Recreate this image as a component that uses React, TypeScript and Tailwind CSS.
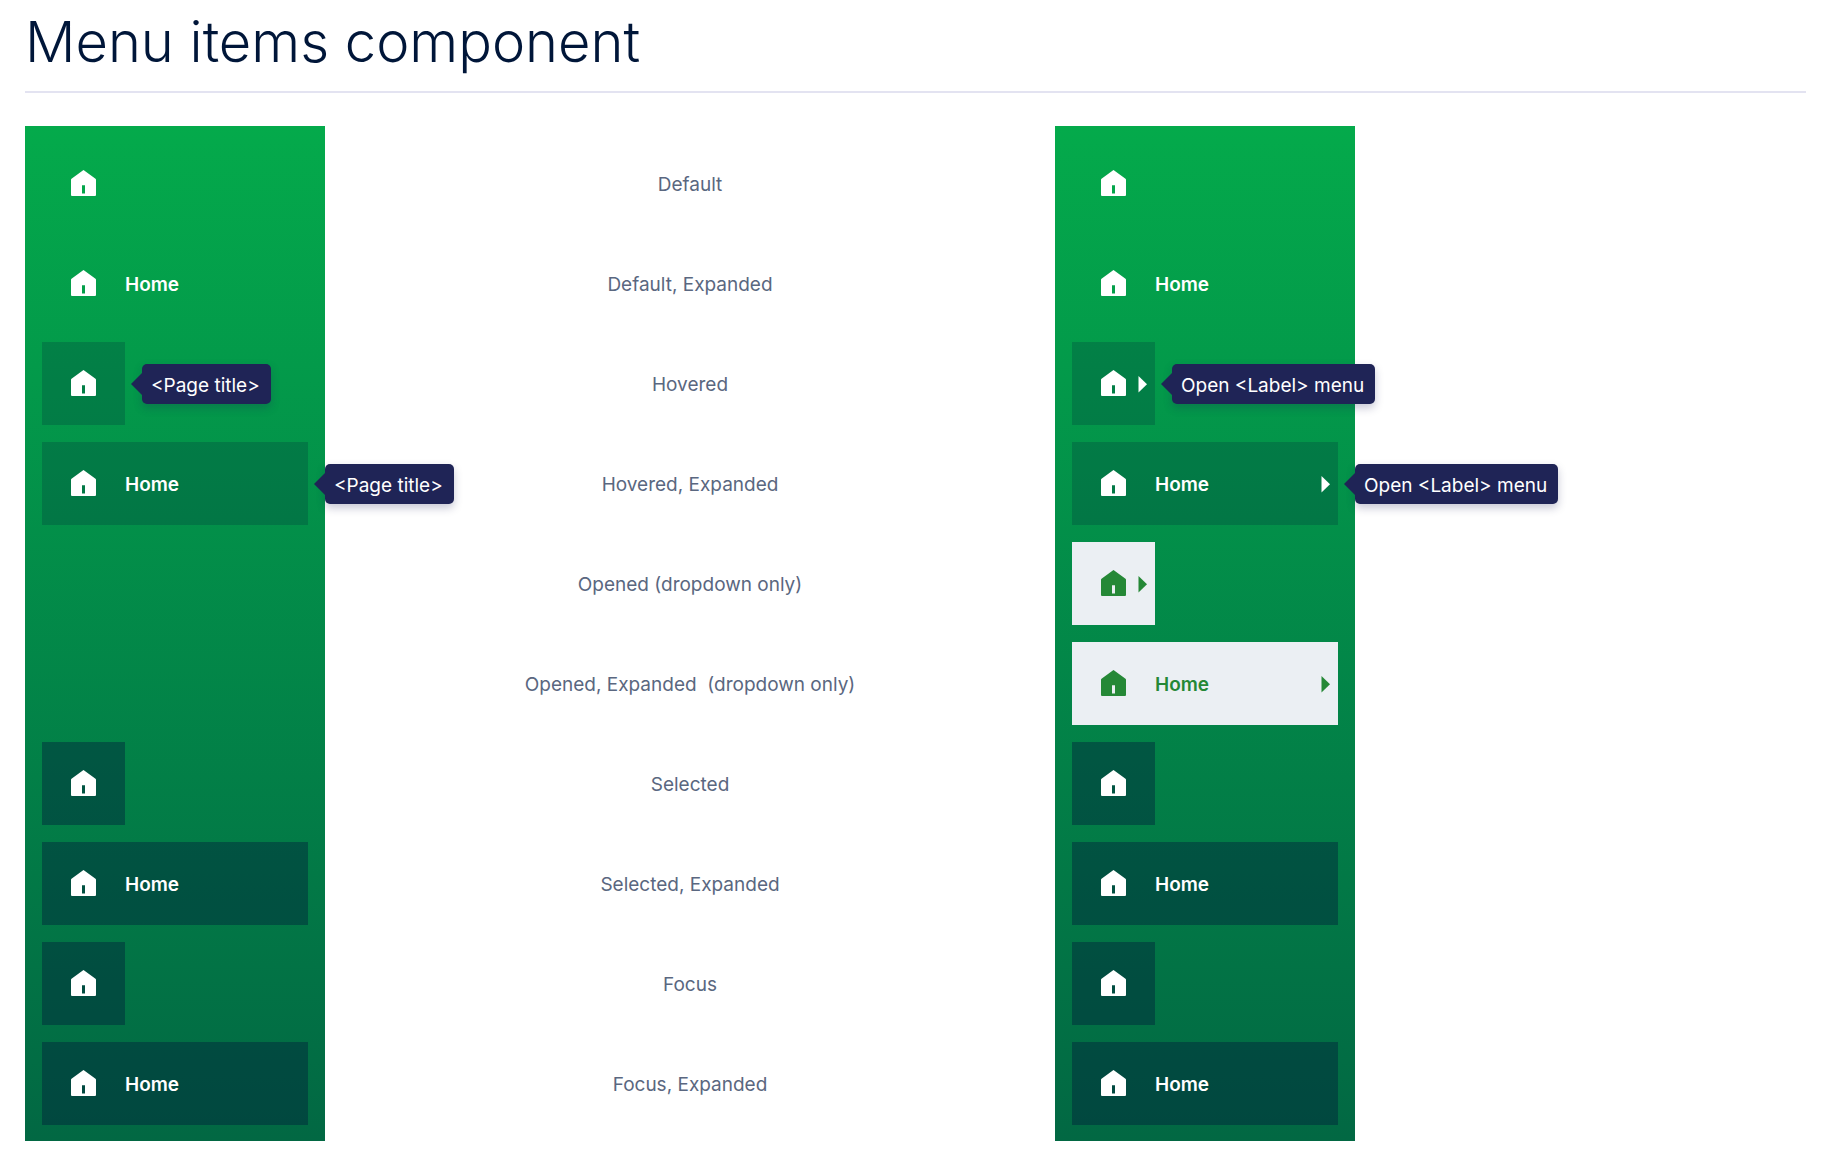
import React from 'react';
import clsx from 'clsx';

type State = 'default' | 'hovered' | 'opened' | 'selected' | 'focus';

type Row = {
  caption: string;
  state: State;
  expanded?: boolean;
};

const rows: Row[] = [
  { caption: 'Default', state: 'default' },
  { caption: 'Default, Expanded', state: 'default', expanded: true },
  { caption: 'Hovered', state: 'hovered' },
  { caption: 'Hovered, Expanded', state: 'hovered', expanded: true },
  { caption: 'Opened (dropdown only)', state: 'opened' },
  { caption: 'Opened, Expanded  (dropdown only)', state: 'opened', expanded: true },
  { caption: 'Selected', state: 'selected' },
  { caption: 'Selected, Expanded', state: 'selected', expanded: true },
  { caption: 'Focus', state: 'focus' },
  { caption: 'Focus, Expanded', state: 'focus', expanded: true },
];

const stateStyles: Record<State, string> = {
  default: 'text-white',
  hovered: 'bg-[#001639]/20 text-white',
  opened: 'bg-[#ebeff3] text-[#258836]',
  selected: 'bg-[#001639]/40 text-white',
  focus: 'bg-[#001639]/40 text-white',
};

const HomeIcon = () => (
  <svg className="h-[27px] w-[25px] shrink-0" viewBox="0 0 25 27" fill="currentColor" aria-hidden="true">
    <path
      fillRule="evenodd"
      d="M11.8 0.4a1.1 1.1 0 0 1 1.4 0L24.5 8.7a1.2 1.2 0 0 1 .5 1V25a1 1 0 0 1-1 1H1a1 1 0 0 1-1-1V9.7a1.2 1.2 0 0 1 .5-1zM11 15.3V23.5H14V15.3z"
    />
  </svg>
);

const Caret = () => (
  <svg className="h-[19px] w-[9px]" viewBox="0 0 9 19" fill="currentColor" aria-hidden="true">
    <path d="M0.5 2L9 10.3L0.5 18.6z" />
  </svg>
);

const Tooltip = ({ text }: { text: string }) => (
  <div
    role="tooltip"
    className="absolute left-full top-[22px] z-10 ml-[17px] flex h-10 items-center whitespace-nowrap rounded-[5px] bg-[#1f2456] pl-[9px] pr-[11px] pt-[3px] text-[19px] leading-7 text-white shadow-[0_4px_8px_rgba(31,36,86,0.25)]"
  >
    <svg
      className="absolute right-full top-[9px] h-[22px] w-[11px]"
      viewBox="0 0 11 22"
      fill="#1f2456"
      aria-hidden="true"
    >
      <path d="M11 0L0 11L11 22z" />
    </svg>
    {text}
  </div>
);

const MenuItem = ({ row, dropdown }: { row: Row; dropdown?: boolean }) => {
  const { state, expanded } = row;
  const showCaret = dropdown && (state === 'hovered' || state === 'opened');

  return (
    <div className={clsx('relative', expanded ? 'w-full' : 'w-[83px]')}>
      <button
        type="button"
        aria-label="Home"
        className={clsx(
          'flex h-[83px] w-full items-center pl-[29px] pr-2 text-[19px] font-semibold leading-7',
          stateStyles[state]
        )}
      >
        <HomeIcon />
        {expanded && <span className="ml-[29px] pt-[3px]">Home</span>}
        {showCaret && (
          <span className="ml-auto">
            <Caret />
          </span>
        )}
      </button>
      {state === 'hovered' && <Tooltip text={dropdown ? 'Open <Label> menu' : '<Page title>'} />}
    </div>
  );
};

const Sidebar = ({ dropdown }: { dropdown?: boolean }) => (
  <nav className="bg-linear-to-b from-[#04aa4b] to-[#026843] px-[17px] py-4">
    <ul className="flex flex-col gap-[17px]">
      {rows.map((row) => (
        <li key={row.caption} className="h-[83px]">
          {(dropdown || row.state !== 'opened') && <MenuItem row={row} dropdown={dropdown} />}
        </li>
      ))}
    </ul>
  </nav>
);

const App = () => {
  return (
    <main className="min-h-screen bg-white pb-5 pl-[25px] pr-5 font-['Inter',sans-serif]">
      <h1 className="border-b-2 border-[#e3e3f1] pb-[14px] pt-[7px] text-[56px] font-light leading-[70px] text-[#001639]">
        Menu items component
      </h1>
      <div className="mt-[33px] grid grid-cols-[300px_730fr_300px_451fr]">
        <Sidebar />
        <ul className="flex flex-col gap-[17px] pt-[17px] text-center text-[19px] leading-7 text-[#5a6780]">
          {rows.map((row) => (
            <li key={row.caption} className="flex h-[83px] items-center justify-center whitespace-pre">
              {row.caption}
            </li>
          ))}
        </ul>
        <Sidebar dropdown />
      </div>
    </main>
  );
};

export default App;
